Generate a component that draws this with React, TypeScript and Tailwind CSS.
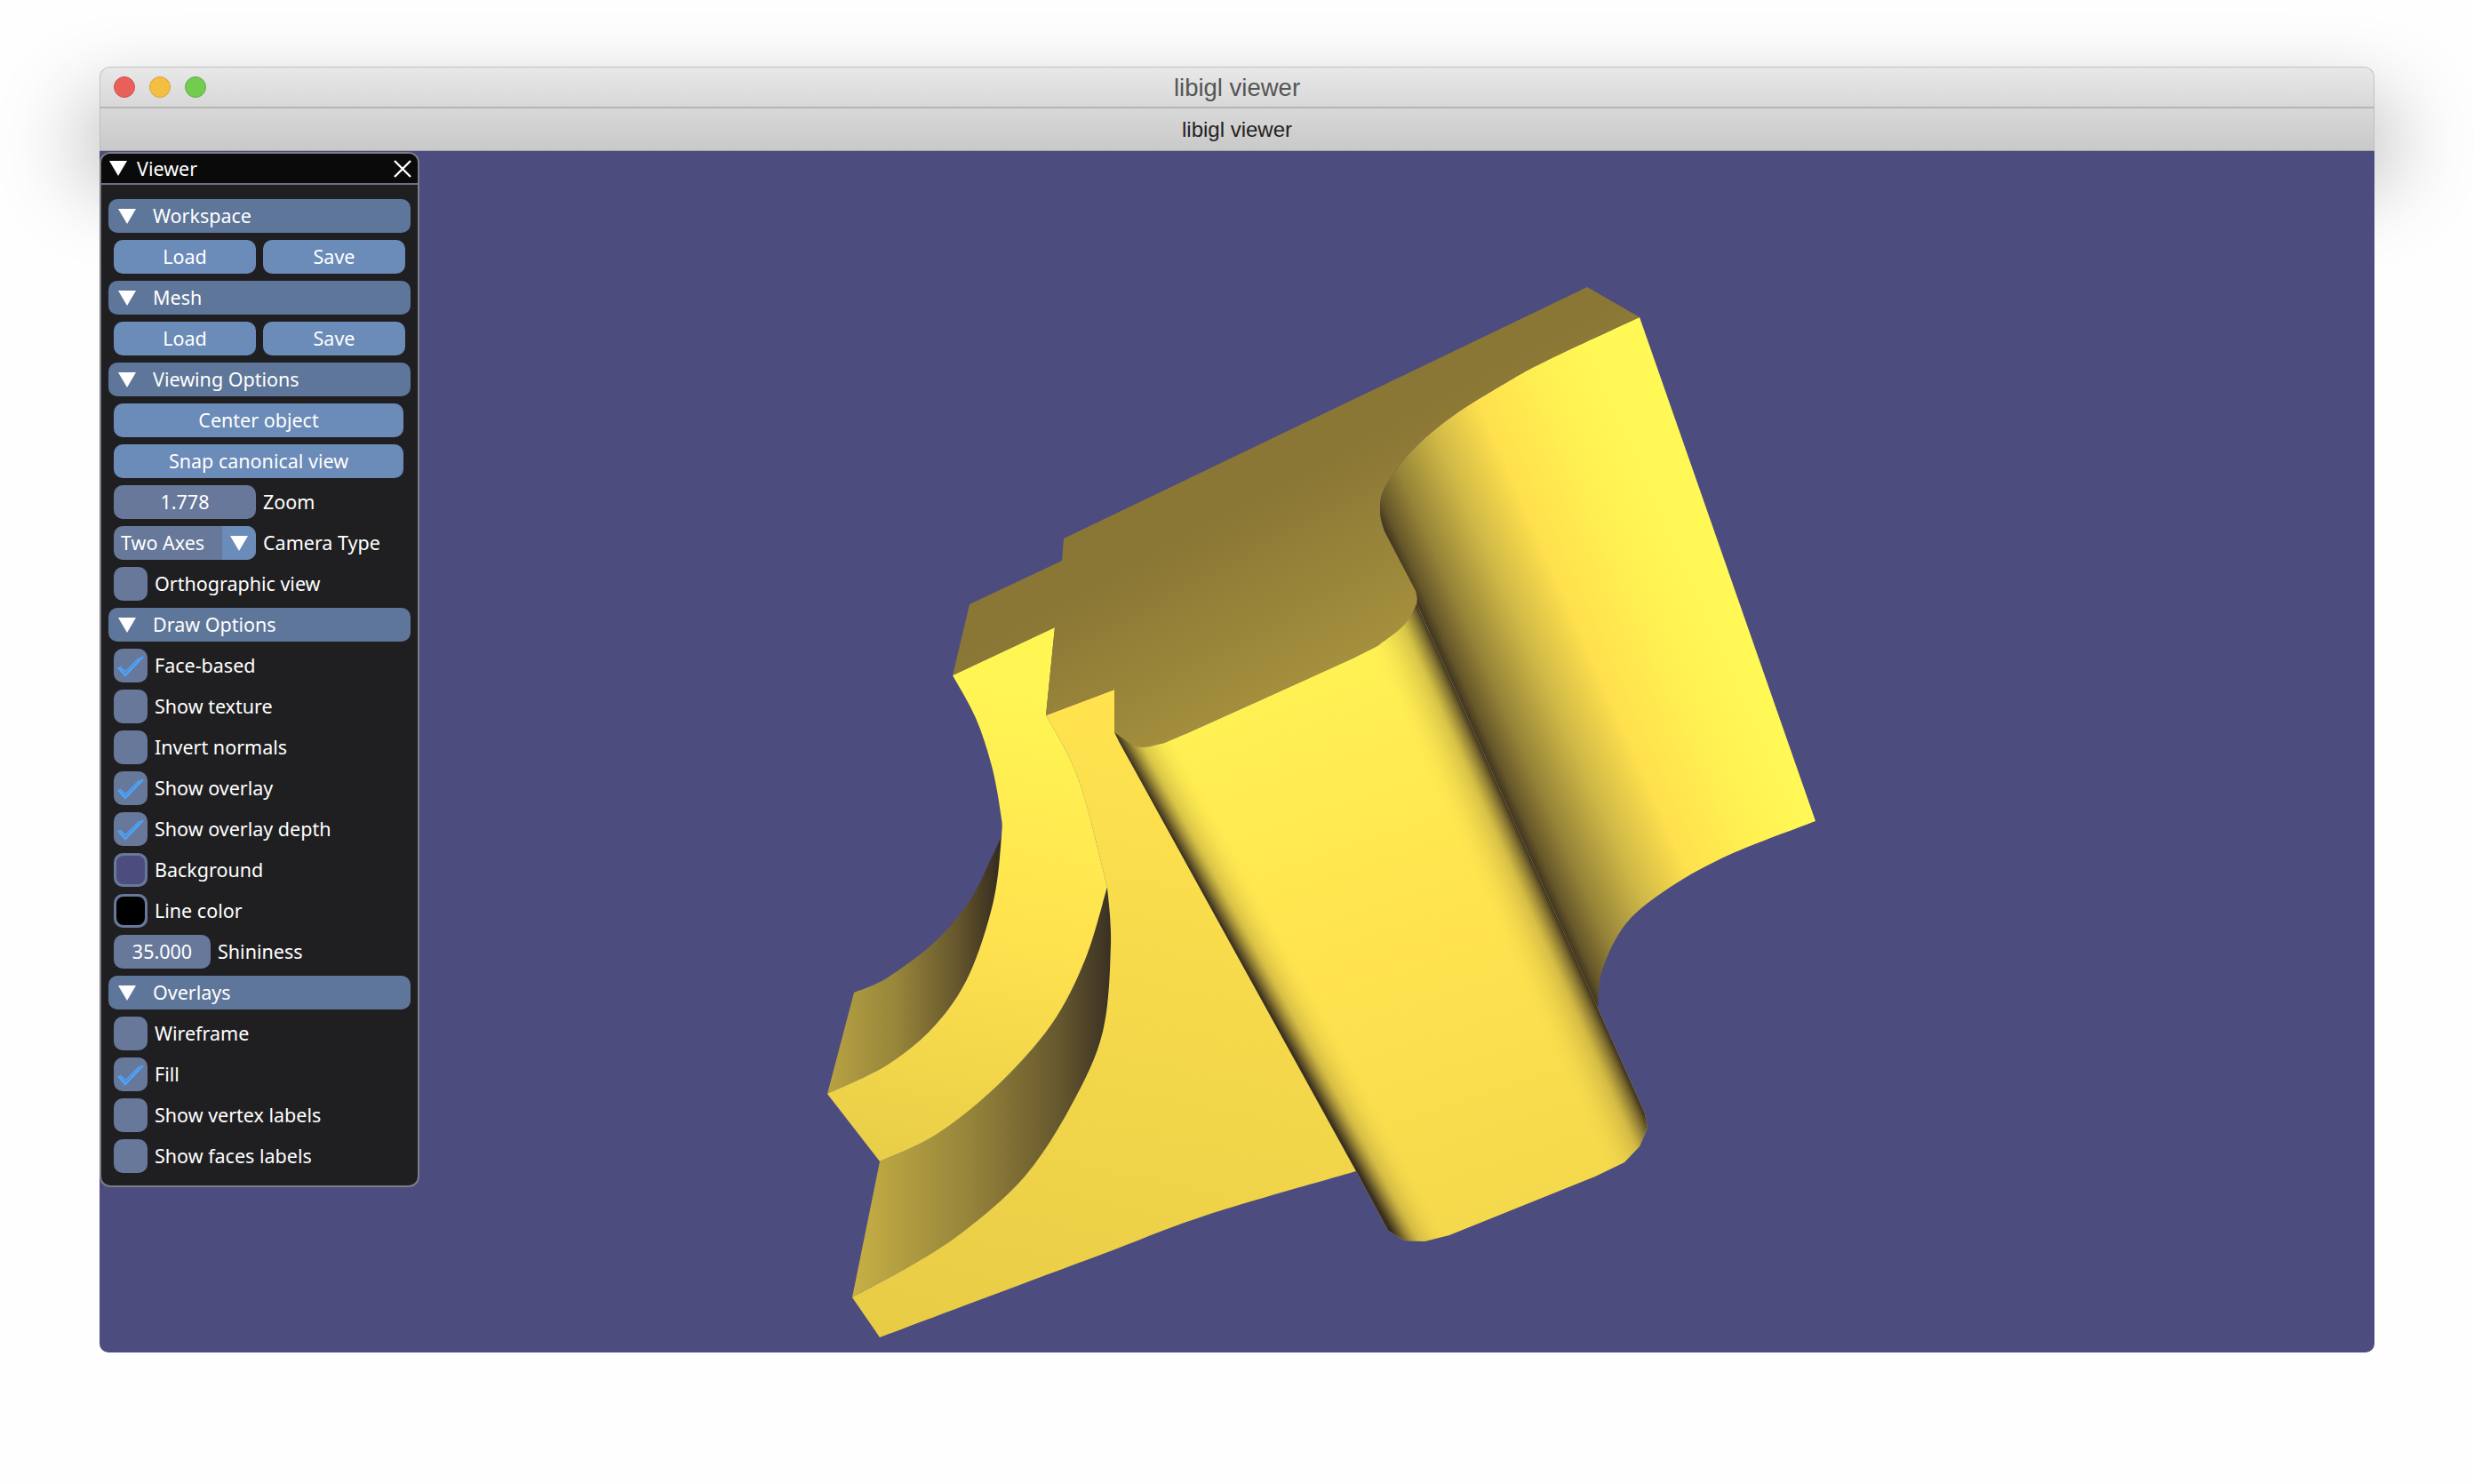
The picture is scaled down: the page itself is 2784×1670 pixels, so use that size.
import type { ReactNode } from "react";

const FONT = "font-['Noto_Sans',sans-serif]";

type Pt = [number, number];

// catmull-rom through the traced points, continues an open path
function curve(pts: Pt[]) {
  let d = "";
  for (let i = 0; i < pts.length - 1; i++) {
    const p0 = pts[Math.max(i - 1, 0)];
    const p1 = pts[i];
    const p2 = pts[i + 1];
    const p3 = pts[Math.min(i + 2, pts.length - 1)];
    const c1x = p1[0] + (p2[0] - p0[0]) / 6;
    const c1y = p1[1] + (p2[1] - p0[1]) / 6;
    const c2x = p2[0] - (p3[0] - p1[0]) / 6;
    const c2y = p2[1] - (p3[1] - p1[1]) / 6;
    d += ` C${c1x} ${c1y} ${c2x} ${c2y} ${p2[0]} ${p2[1]}`;
  }
  return d;
}

const rev = (pts: Pt[]) => [...pts].reverse();

function Triangle({ className }: { className: string }) {
  return (
    <svg viewBox="0 0 20 17" className={className}>
      <polygon points="0,0 20,0 10,17" fill="#fff" />
    </svg>
  );
}

function Header({ label }: { label: string }) {
  return (
    <div className="flex h-[38px] w-[340px] items-center rounded-[10px] bg-[#5e7699] pl-[11px] text-white">
      <Triangle className="h-[17px] w-[20px]" />
      <span className="ml-[19px]">{label}</span>
    </div>
  );
}

function Btn({ label, w }: { label: string; w: string }) {
  return (
    <div className={`flex h-[38px] items-center justify-center rounded-[10px] bg-[#6b8bb8] text-white ${w}`}>
      {label}
    </div>
  );
}

function Row({ children }: { children: ReactNode }) {
  return <div className="ml-[6px] flex h-[38px] items-center">{children}</div>;
}

function Check({ label, on }: { label: string; on?: boolean }) {
  return (
    <Row>
      <div className="flex h-[38px] w-[38px] items-center justify-center rounded-[10px] bg-[#67789a]">
        {on && (
          <svg viewBox="0 0 38 38" className="h-[38px] w-[38px]">
            <path d="M5 21 L13 30 L33 9" fill="none" stroke="#4aa5ff" strokeWidth="2.5" />
            <path d="M7 20 L13 26 L29 10" fill="none" stroke="#4aa5ff" strokeWidth="1.5" />
          </svg>
        )}
      </div>
      <span className="ml-[8px] text-white">{label}</span>
    </Row>
  );
}

function Swatch({ label, inner }: { label: string; inner: string }) {
  return (
    <Row>
      <div className="flex h-[38px] w-[38px] items-center justify-center rounded-[10px] bg-[#67789a]">
        <div className={`h-[32px] w-[32px] rounded-[8px] ${inner}`} />
      </div>
      <span className="ml-[8px] text-white">{label}</span>
    </Row>
  );
}

function ValueRow({ value, label, w }: { value: string; label: string; w: string }) {
  return (
    <Row>
      <div className={`flex h-[38px] items-center justify-center rounded-[10px] bg-[#67789a] text-white ${w}`}>{value}</div>
      <span className="ml-[8px] text-white">{label}</span>
    </Row>
  );
}

function ViewerPanel() {
  return (
    <div className={`absolute left-0 top-px h-[1165px] w-[360px] overflow-hidden rounded-[12px] border-2 border-[#7d7d88] bg-[#1f1f21] text-[21.5px] leading-none ${FONT}`}>
      <div className="box-content flex h-[33px] items-center border-b-2 border-[#6e6e80] bg-[#0a0a0a] pl-[9px] pr-[7px] text-white">
        <Triangle className="h-[17px] w-[20px]" />
        <span className="ml-[11px] flex-1">Viewer</span>
        <svg viewBox="0 0 20 20" className="h-[20px] w-[20px]">
          <path d="M1 1 L19 19 M19 1 L1 19" stroke="#fff" strokeWidth="2.4" />
        </svg>
      </div>
      <div className="flex flex-col gap-[8px] px-[8px] pt-[16px]">
        <Header label="Workspace" />
        <Row>
          <Btn label="Load" w="w-[160px]" />
          <div className="w-[8px]" />
          <Btn label="Save" w="w-[160px]" />
        </Row>
        <Header label="Mesh" />
        <Row>
          <Btn label="Load" w="w-[160px]" />
          <div className="w-[8px]" />
          <Btn label="Save" w="w-[160px]" />
        </Row>
        <Header label="Viewing Options" />
        <Row><Btn label="Center object" w="w-[326px]" /></Row>
        <Row><Btn label="Snap canonical view" w="w-[326px]" /></Row>
        <ValueRow value="1.778" label="Zoom" w="w-[160px]" />
        <Row>
          <div className="flex h-[38px] w-[160px] overflow-hidden rounded-[10px] bg-[#67789a] text-white">
            <span className="flex w-[122px] items-center pl-[8px]">Two Axes</span>
            <span className="flex w-[38px] items-center justify-center bg-[#6b8bb8]">
              <Triangle className="h-[17px] w-[20px]" />
            </span>
          </div>
          <span className="ml-[8px] text-white">Camera Type</span>
        </Row>
        <Check label="Orthographic view" />
        <Header label="Draw Options" />
        <Check label="Face-based" on />
        <Check label="Show texture" />
        <Check label="Invert normals" />
        <Check label="Show overlay" on />
        <Check label="Show overlay depth" on />
        <Swatch label="Background" inner="bg-[#4c4c7f]" />
        <Swatch label="Line color" inner="bg-black" />
        <ValueRow value="35.000" label="Shininess" w="w-[109px]" />
        <Header label="Overlays" />
        <Check label="Wireframe" />
        <Check label="Fill" on />
        <Check label="Show vertex labels" />
        <Check label="Show faces labels" />
      </div>
    </div>
  );
}

// traced off the render, coordinates are page pixels (viewBox starts at the canvas corner)
const stripInner: Pt[] = [[1072, 760], [1098, 808], [1116, 862], [1126, 915], [1127, 941], [1118, 1014], [1091, 1096], [1053, 1153], [999, 1198], [931, 1231]];
const stripInnerLow: Pt[] = [[1127, 941], [1118, 1014], [1091, 1096], [1053, 1153], [999, 1198], [931, 1231]];
const darkATop: Pt[] = [[961, 1117], [999, 1100], [1053, 1059], [1091, 1014], [1114, 969], [1127, 941]];
const stripOuterTop: Pt[] = [[1177, 805], [1203, 852], [1221, 900], [1246, 998]];
const stripOuterLow: Pt[] = [[1246, 998], [1221, 1080], [1183, 1153], [1122, 1222], [1053, 1277], [990, 1307]];
const darkBRight: Pt[] = [[1246, 998], [1250, 1063], [1241, 1161], [1206, 1243], [1153, 1324], [1084, 1386], [1022, 1426], [959, 1460]];
const plateArc: Pt[] = [[2043, 924], [1948, 961], [1880, 998], [1830, 1039], [1803, 1092], [1798, 1135]];
const topArc: Pt[] = [[1845, 357], [1742, 405], [1696, 430], [1635, 468], [1589, 507], [1558, 549], [1553, 577], [1558, 598]];
const noseEdge: Pt[] = [[1593, 665], [1594, 679], [1581, 702], [1558, 721], [1524, 740], [1336, 825], [1302, 838], [1279, 840], [1254, 824]];
const sheetBottom: Pt[] = [[1526, 1318], [1359, 1367], [1244, 1410], [1110, 1460], [990, 1505]];

function Model() {
  const cyl =
    "M1254 824 L1279 840 L1302 838 L1336 825 L1524 740 L1558 721 L1581 702 L1594 679 L1851 1253 L1854 1269 L1845 1290 L1828 1308 L1795 1324 L1631 1390 L1603 1397 L1580 1396 L1562 1385 L1526 1318 L1260 836 Z";
  return (
    <svg viewBox="112 170 2560 1352" className="absolute inset-0 h-full w-full">
      <defs>
        <linearGradient id="plate" gradientUnits="userSpaceOnUse" x1="1558" y1="598" x2="1832" y2="476">
          <stop offset="0" stopColor="#3f3420" />
          <stop offset="0.04" stopColor="#665729" />
          <stop offset="0.14" stopColor="#958338" />
          <stop offset="0.32" stopColor="#cfb847" />
          <stop offset="0.52" stopColor="#ffe04d" />
          <stop offset="0.78" stopColor="#fff052" />
          <stop offset="1" stopColor="#fff855" />
        </linearGradient>
        <linearGradient id="top" gradientUnits="userSpaceOnUse" x1="1400" y1="560" x2="1540" y2="820">
          <stop offset="0" stopColor="#8a7635" />
          <stop offset="1" stopColor="#ad993f" />
        </linearGradient>
        <linearGradient id="cylBase" gradientUnits="userSpaceOnUse" x1="1400" y1="800" x2="1600" y2="1400">
          <stop offset="0" stopColor="#fff054" />
          <stop offset="0.5" stopColor="#ffe24e" />
          <stop offset="1" stopColor="#f5d94c" />
        </linearGradient>
        <linearGradient id="cylLeft" gradientUnits="userSpaceOnUse" x1="1260" y1="836" x2="1321" y2="802">
          <stop offset="0" stopColor="#3a3020" stopOpacity="1" />
          <stop offset="0.08" stopColor="#5a4c26" stopOpacity="0.9" />
          <stop offset="0.3" stopColor="#b09a3c" stopOpacity="0.5" />
          <stop offset="0.8" stopColor="#ffe24e" stopOpacity="0" />
        </linearGradient>
        <linearGradient id="cylRight" gradientUnits="userSpaceOnUse" x1="1594" y1="679" x2="1520" y2="712">
          <stop offset="0" stopColor="#3f3420" stopOpacity="1" />
          <stop offset="0.07" stopColor="#5a4c26" stopOpacity="0.85" />
          <stop offset="0.3" stopColor="#b09a3c" stopOpacity="0.5" />
          <stop offset="0.85" stopColor="#ffe24e" stopOpacity="0" />
        </linearGradient>
        <linearGradient id="sheet" gradientUnits="userSpaceOnUse" x1="1200" y1="805" x2="1050" y2="1505">
          <stop offset="0" stopColor="#ffe24e" />
          <stop offset="1" stopColor="#e8cc46" />
        </linearGradient>
        <linearGradient id="strip" gradientUnits="userSpaceOnUse" x1="1100" y1="760" x2="1000" y2="1307">
          <stop offset="0" stopColor="#fff654" />
          <stop offset="0.5" stopColor="#ffe24e" />
          <stop offset="1" stopColor="#e8ce48" />
        </linearGradient>
        <linearGradient id="darkA" gradientUnits="userSpaceOnUse" x1="931" y1="1100" x2="1127" y2="1100">
          <stop offset="0" stopColor="#b8a243" />
          <stop offset="0.4" stopColor="#97853a" />
          <stop offset="0.75" stopColor="#65562c" />
          <stop offset="1" stopColor="#332b1e" />
        </linearGradient>
        <linearGradient id="darkB" gradientUnits="userSpaceOnUse" x1="960" y1="1200" x2="1250" y2="1200">
          <stop offset="0" stopColor="#c6b045" />
          <stop offset="0.45" stopColor="#96843a" />
          <stop offset="0.8" stopColor="#66582e" />
          <stop offset="1" stopColor="#3a3122" />
        </linearGradient>
        <clipPath id="cylClip">
          <path d={cyl} />
        </clipPath>
      </defs>

      {/* dark undersides */}
      <path fill="url(#darkA)" d={`M961 1117${curve(darkATop)}${curve(stripInnerLow)} Z`} />
      <path fill="url(#darkB)" d={`M990 1307${curve(rev(stripOuterLow))}${curve(darkBRight)} Z`} />

      {/* flat sheet */}
      <path
        fill="url(#sheet)"
        d={`M1177 805 L1254 776 L1254 824 L1260 836 L1526 1318${curve(sheetBottom)} L959 1460${curve(rev(darkBRight))}${curve(rev(stripOuterTop))} Z`}
      />

      {/* front strip */}
      <path
        fill="url(#strip)"
        d={`M1072 760 L1187 706 L1177 805${curve(stripOuterTop)}${curve(stripOuterLow)} L931 1231${curve(rev(stripInner))} Z`}
      />

      {/* right plate */}
      <path
        fill="url(#plate)"
        d={`M1845 357 L2043 924${curve(plateArc)} L1558 598${curve(rev(topArc))} Z`}
      />

      {/* cylinder */}
      <path fill="url(#cylBase)" d={cyl} />
      <g clipPath="url(#cylClip)">
        <polygon fill="url(#cylLeft)" points="1236,820 1598,1479 1702,1449 1340,790" />
        <polygon fill="url(#cylRight)" points="1594,670 1902,1359 1808,1389 1500,700" />
      </g>

      {/* top face */}
      <path
        fill="url(#top)"
        d={`M1786 323 L1845 357${curve(topArc)} L1593 665${curve(noseEdge)} L1254 776 L1177 805 L1187 706 L1072 760 L1091 680 L1195 631 L1197 606 Z`}
      />
    </svg>
  );
}

export default function App() {
  return (
    <div className="relative min-h-screen overflow-hidden bg-[#fefefe] pl-[112px] pt-[75px]">
      <div className="relative h-[1447px] w-[2560px]">
        {/* window shadow only shows around the title bars */}
        <div className="absolute inset-x-0 top-[60px] h-[50px] shadow-[0_0_100px_10px_rgba(0,0,0,0.42)]" />
        <div className="relative flex h-full flex-col">
          <div className="box-border flex h-[47px] items-center rounded-t-[12px] border border-b-2 border-[#c2c2c2] border-b-[#b6b6b6] bg-gradient-to-b from-[#e8e8e8] to-[#d8d8d8]">
            <div className="ml-[15px] flex gap-[16px]">
              <span className="h-[24px] w-[24px] rounded-full border border-[#d24f48] bg-[#e9605a]" />
              <span className="h-[24px] w-[24px] rounded-full border border-[#d9a13a] bg-[#f3bf41]" />
              <span className="h-[24px] w-[24px] rounded-full border border-[#5fae45] bg-[#72cc50]" />
            </div>
            <span className="absolute inset-x-0 top-[1px] flex h-[46px] items-center justify-center font-['Liberation_Sans',sans-serif] text-[27.5px] text-[#555555]">
              libigl viewer
            </span>
          </div>
          <div className="flex h-[48px] items-center justify-center border-x border-b border-[#bdbdbd] border-b-[#a9a9a9] bg-gradient-to-b from-[#d8d8d8] to-[#c9c9c9] font-['Liberation_Sans',sans-serif] text-[24px] text-[#222222]">
            libigl viewer
          </div>
          <div className="relative flex-1 overflow-hidden rounded-b-[10px] bg-[#4c4c7f]">
            <Model />
            <ViewerPanel />
          </div>
        </div>
      </div>
    </div>
  );
}
